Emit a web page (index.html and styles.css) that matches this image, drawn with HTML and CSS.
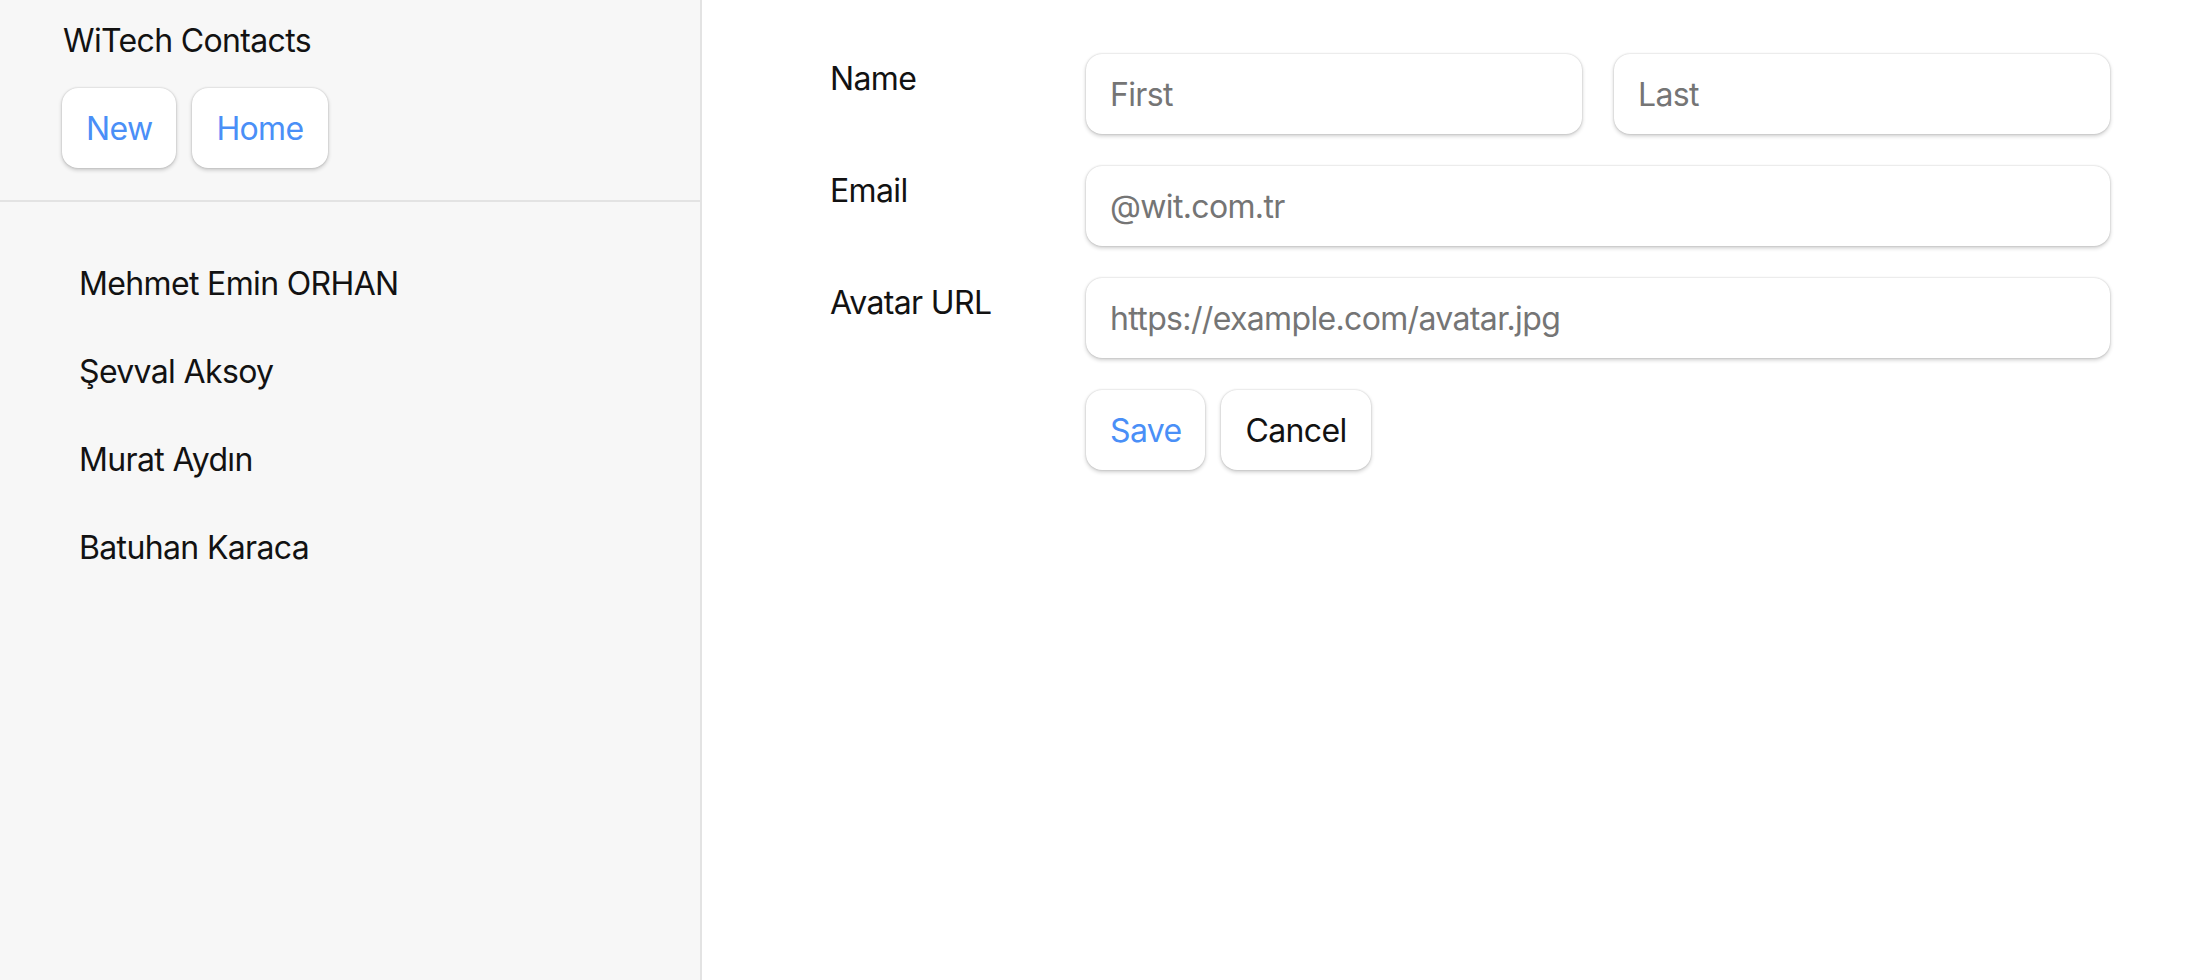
FILE: index.html
```html
<!DOCTYPE html>
<html lang="tr">
<head>
<meta charset="utf-8">
<title>WiTech Contacts</title>
<link rel="stylesheet" href="styles.css">
</head>
<body>
<div class="app">
  <aside class="sidebar">
    <div class="sidebar-head">
      <h1 class="brand">WiTech Contacts</h1>
      <div class="head-actions">
        <button class="btn" type="button">New</button>
        <button class="btn" type="button">Home</button>
      </div>
    </div>
    <nav class="contact-nav">
      <ul class="contact-list">
        <li><a class="contact-link" href="#">Mehmet Emin ORHAN</a></li>
        <li><a class="contact-link" href="#">Şevval Aksoy</a></li>
        <li><a class="contact-link" href="#">Murat Aydın</a></li>
        <li><a class="contact-link" href="#">Batuhan Karaca</a></li>
      </ul>
    </nav>
  </aside>
  <main class="detail">
    <form class="contact-form">
      <div class="form-row">
        <span class="field-label">Name</span>
        <input class="field first-name" type="text" placeholder="First">
        <input class="field" type="text" placeholder="Last">
      </div>
      <label class="form-row">
        <span class="field-label">Email</span>
        <input class="field" type="text" placeholder="@wit.com.tr">
      </label>
      <label class="form-row">
        <span class="field-label">Avatar URL</span>
        <input class="field" type="text" placeholder="https://example.com/avatar.jpg">
      </label>
      <div class="form-actions">
        <button class="btn" type="submit">Save</button>
        <button class="btn btn-plain" type="button">Cancel</button>
      </div>
    </form>
  </main>
</div>
</body>
</html>
```

FILE: styles.css
```css
* { box-sizing: border-box; }

html, body {
  margin: 0;
  height: 100%;
}

body {
  font-family: Inter, "Noto Sans", sans-serif;
  font-size: 32px;
  line-height: 48px;
  letter-spacing: -0.65px;
  color: #121212;
  background: #ffffff;
}

.app {
  display: flex;
  height: 100%;
}

.sidebar {
  width: 702px;
  flex: 0 0 702px;
  background: #f7f7f7;
  border-right: 2px solid #e3e3e3;
  display: flex;
  flex-direction: column;
}

.sidebar-head {
  padding: 17px 62px 32px;
  border-bottom: 2px solid #e3e3e3;
}

.brand {
  margin: 0 0 23px 1px;
  font-size: 32px;
  font-weight: 400;
  line-height: 48px;
}

.head-actions {
  display: flex;
  gap: 16px;
}

.btn {
  font-family: inherit;
  font-size: 32px;
  letter-spacing: -0.65px;
  line-height: 48px;
  padding: 17px 24px 15px;
  border: none;
  border-radius: 16px;
  background: #ffffff;
  color: #4a8ff7;
  box-shadow: 0 0 2px rgba(0, 0, 0, 0.2), 0 2px 4px rgba(0, 0, 0, 0.2);
  margin: 0;
}

.btn-plain { color: #121212; }

.contact-nav {
  padding: 34px 64px 0;
}

.contact-list {
  list-style: none;
  margin: 0;
  padding: 0;
}

.contact-list li {
  margin: 8px 0;
}

.contact-link {
  display: block;
  padding: 16px 16px 16px 15px;
  color: inherit;
  text-decoration: none;
  border-radius: 16px;
}

.detail {
  flex: 1;
  padding: 54px 128px;
}

.contact-form {
  display: flex;
  flex-direction: column;
  gap: 32px;
  max-width: 1280px;
}

.form-row {
  display: flex;
  margin: 0;
}

.field-label {
  width: 256px;
  flex: 0 0 256px;
  padding-top: 1px;
}

.field {
  flex: 1 1 0;
  min-width: 0;
  font-family: inherit;
  font-size: 32px;
  letter-spacing: -0.65px;
  line-height: 48px;
  padding: 17px 24px 15px;
  border: none;
  border-radius: 16px;
  background: #ffffff;
  color: #121212;
  box-shadow: 0 0 2px rgba(0, 0, 0, 0.2), 0 2px 4px rgba(0, 0, 0, 0.2);
  margin: 0;
  outline: none;
}

.field::placeholder { color: #757575; }

.first-name { margin-right: 32px; }

.form-actions {
  display: flex;
  gap: 16px;
  margin-left: 256px;
}
```
